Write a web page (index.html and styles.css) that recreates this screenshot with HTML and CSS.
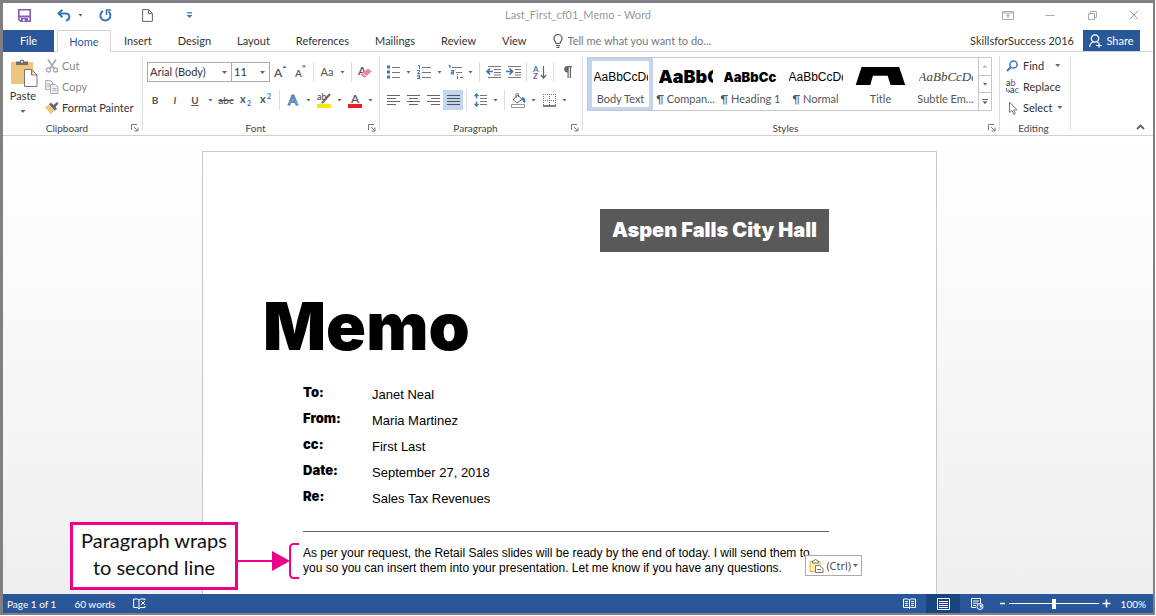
FILE: index.html
```html
<!DOCTYPE html>
<html lang="en">
<head>
<meta charset="utf-8">
<title>Last_First_cf01_Memo - Word</title>
<link rel="stylesheet" href="styles.css">
</head>
<body>
<svg class="defs" aria-hidden="true">
  <symbol id="launch" viewBox="0 0 8 8"><path d="M.5 6V.5H6M3 3l3.500 3.500M7 3.500V7H3.500" fill="none" stroke="#777"/></symbol>
</svg>
<div class="window">
  <header class="titlebar">
    <div class="quick">
      <button class="q" aria-label="Save"><svg width="13" height="13" viewBox="0 0 13 13"><path d="M.8.8h11.400v11.400H2.500L.8 10.500z" fill="#fff" stroke="#8a5bab" stroke-width="1.600"/><path d="M1 6.500h11v2H1zM3 9h7v3.500H3z" fill="#8a5bab"/><path d="M5 10h1.500v2.500H5z" fill="#fff"/></svg></button>
      <button class="q q-undo" aria-label="Undo"><svg width="14" height="13" viewBox="0 0 14 13"><path d="M2 4.500h6.500c5 0 5 6.500.5 7" fill="none" stroke="#3a78b5" stroke-width="2"/><path d="M5.500.8L1.500 4.500l4 3.700" fill="none" stroke="#3a78b5" stroke-width="2"/></svg></button>
      <button class="caret" aria-label="Undo list"></button>
      <button class="q q-redo" aria-label="Repeat"><svg width="13" height="13" viewBox="0 0 13 13"><path d="M4 2a5 5 0 1 0 5.500.5" fill="none" stroke="#3a78b5" stroke-width="2"/><path d="M7.500 6V1H12" fill="none" stroke="#3a78b5" stroke-width="1.600"/></svg></button>
      <button class="q q-new" aria-label="New"><svg width="11" height="13" viewBox="0 0 11 13"><path d="M.6.6h6l3.800 3.800v8H.6zM6.500.6v4h4" fill="#fff" stroke="#666"/></svg></button>
      <button class="q q-more" aria-label="Customize toolbar"><svg width="7" height="7" viewBox="0 0 7 7"><path d="M1 .8h5" stroke="#3a78b5" stroke-width="1.300"/><path d="M.5 3h6l-3 3z" fill="#3a78b5"/></svg></button>
    </div>
    <h1 class="caption">Last_First_cf01_Memo - Word</h1>
    <div class="winbtns">
      <button aria-label="Ribbon options"><svg width="12" height="9" viewBox="0 0 12 9"><path d="M.5.5h11v8H.5zM.5 2h11M6 7.500V3.500M4 5.300l2-1.800 2 1.800" fill="none" stroke="#a8a8a8"/></svg></button>
      <button aria-label="Minimize"><svg width="10" height="9" viewBox="0 0 10 9"><path d="M.5 4.500h9" stroke="#aaa"/></svg></button>
      <button aria-label="Restore"><svg width="9" height="9" viewBox="0 0 9 9"><path d="M.5 2.500h6v6h-6zM2.500 2.500v-2h6v6h-2" fill="none" stroke="#aaa"/></svg></button>
      <button aria-label="Close"><svg width="10" height="10" viewBox="0 0 10 10"><path d="M.7.7l8.600 8.600M9.300.7L.7 9.300" stroke="#a0a0a0"/></svg></button>
    </div>
  </header>

  <nav class="tabs">
    <button class="tab file">File</button>
    <button class="tab home">Home</button>
    <button class="tab">Insert</button>
    <button class="tab">Design</button>
    <button class="tab">Layout</button>
    <button class="tab">References</button>
    <button class="tab">Mailings</button>
    <button class="tab">Review</button>
    <button class="tab">View</button>
    <label class="tell"><svg width="10" height="14" viewBox="0 0 10 14"><path d="M3 9.500C3 7.500 1 7 1 4.500a4 4 0 0 1 8 0C9 7 7 7.500 7 9.500zM3 11.500h4M3.500 13.300h3" fill="none" stroke="#555" stroke-width="1.200"/></svg><input type="text" placeholder="Tell me what you want to do..." aria-label="Tell me what you want to do"></label>
    <span class="account">SkillsforSuccess 2016</span>
    <button class="share"><svg width="14" height="14" viewBox="0 0 14 14"><circle cx="6" cy="4.500" r="3.700" fill="none" stroke="#fff" stroke-width="1.300"/><path d="M.8 13c0-3 1.500-4.500 3.500-5M8 8l1.500 1M7 11.500h6M10 8.700v5" fill="none" stroke="#fff" stroke-width="1.200"/></svg>Share</button>
  </nav>

  <div class="ribbon">
    <section class="group clipboard">
      <div class="body">
        <button class="paste">
          <svg width="27" height="28" viewBox="0 0 27 28"><path d="M0 3h22v22H0z" fill="#edc57d"/><path d="M5 6V2.500h3.500a2.600 2.600 0 0 1 5 0H17V6z" fill="#6d6d6d"/><circle cx="11" cy="2.800" r="1" fill="#fff"/><path d="M13.500 10.500h7l5.500 5.500v11.500H13.500zM20.500 10.500V16H26" fill="#fff" stroke="#777"/></svg>
          <span>Paste</span><i class="tri"></i>
        </button>
        <div class="stack">
          <button class="line dim"><svg width="14" height="14" viewBox="0 0 14 14"><path d="M3 .5l6 9M11 .5l-6 9" stroke="#aaa" stroke-width="1.700"/><circle cx="3.500" cy="11" r="2" fill="none" stroke="#aaa" stroke-width="1.300"/><circle cx="10.500" cy="11" r="2" fill="none" stroke="#aaa" stroke-width="1.300"/></svg>Cut</button>
          <button class="line dim"><svg width="14" height="14" viewBox="0 0 14 14"><path d="M.6.6h5l2 2v7h-7zM2 4h3M2 6h3" fill="#f3eef5" stroke="#aaa"/><path d="M5.500 4.500h5l2.500 2.500v6.500H5.500zM7.500 8.500h4M7.500 10.500h4" fill="#f3eef5" stroke="#aaa"/></svg>Copy</button>
          <button class="line"><svg width="14" height="14" viewBox="0 0 14 14"><path d="M0 6l4-2 5 5-3 4.500z" fill="#edc57d"/><path d="M4 3.500l2-2 2.500 2.500L12 1l1.500 1.500-3 3.500 1.500 1.500-2 2.200z" fill="#666"/></svg>Format Painter</button>
        </div>
      </div>
      <footer class="name"><span>Clipboard</span><button class="launch" aria-label="Clipboard pane"><svg width="8" height="8"><use href="#launch"/></svg></button></footer>
    </section>

    <section class="group font">
      <div class="body rows">
        <div class="row first">
          <span class="pick pick-font"><select aria-label="Font"><option>Arial (Body)</option></select></span>
          <span class="pick pick-size"><select aria-label="Font size"><option>11</option></select></span>
          <button class="cell" aria-label="Grow font"><svg width="14" height="14" viewBox="0 0 14 14"><text x="1" y="12" class="gl g12">A</text><path d="M9.500 3l2-2.500L13.500 3z" fill="#3a78b5"/></svg></button>
          <button class="cell" aria-label="Shrink font"><svg width="14" height="14" viewBox="0 0 14 14"><text x="2" y="12" class="gl g10">A</text><path d="M9 .5h4l-2 2.500z" fill="#3a78b5"/></svg></button>
          <i class="sep"></i>
          <button class="cell txt">Aa</button><button class="caret" aria-label="Change case"></button>
          <i class="sep"></i>
          <button class="cell" aria-label="Clear formatting"><svg width="14" height="14" viewBox="0 0 14 14"><text x="0" y="10" class="gl g12">A</text><path d="M2.500 9.500L10 3.500 13.500 6.500 6.500 13z" fill="#e9859c"/><path d="M4.500 8l4 3.500" stroke="#fff"/></svg></button>
        </div>
        <div class="row">
          <button class="cell txt b">B</button><button class="cell txt b i">I</button><button class="cell txt b u">U</button><button class="caret" aria-label="Underline style"></button>
          <button class="cell txt strike">abc</button>
          <button class="cell" aria-label="Subscript"><svg width="14" height="14" viewBox="0 0 14 14"><text x="1" y="10" class="gl g11">x</text><text x="8" y="13" class="bl">2</text></svg></button>
          <button class="cell" aria-label="Superscript"><svg width="14" height="14" viewBox="0 0 14 14"><text x="1" y="10" class="gl g11">x</text><text x="8" y="6" class="bl">2</text></svg></button>
          <i class="sep"></i>
          <button class="cell" aria-label="Text effects"><svg width="14" height="14" viewBox="0 0 14 14"><text x="2" y="12" class="fx">A</text></svg></button><button class="caret" aria-label="Effects list"></button>
          <button class="cell" aria-label="Highlight"><svg width="14" height="16" viewBox="0 0 14 16"><text x="0" y="8" class="gl g9">ab</text><path d="M13 2L6.500 9.500 5 11" stroke="#666" stroke-width="2"/><path d="M0 12h14v4H0z" fill="#f6e80a"/></svg></button><button class="caret" aria-label="Highlight color"></button>
          <button class="cell" aria-label="Font color"><svg width="14" height="16" viewBox="0 0 14 16"><text x="3" y="11" class="gl g12">A</text><path d="M0 12h14v4H0z" fill="#ee1d23"/></svg></button><button class="caret" aria-label="Font color list"></button>
        </div>
      </div>
      <footer class="name"><span>Font</span><button class="launch" aria-label="Font dialog"><svg width="8" height="8"><use href="#launch"/></svg></button></footer>
    </section>

    <section class="group para">
      <div class="body rows">
        <div class="row">
          <button class="cell" aria-label="Bullets"><svg width="13" height="14" viewBox="0 0 13 14"><path d="M0 .5h3v3H0zM0 5.500h3v3H0zM0 10.500h3v3H0z" fill="#3a78b5"/><path d="M5 2.500h8M5 7.500h8M5 12.500h8" stroke="#777"/></svg></button><button class="caret" aria-label="Bullet list"></button>
          <button class="cell" aria-label="Numbering"><svg width="14" height="14" viewBox="0 0 14 14"><path d="M1 .5h1.500V4M0 5.500h2.500v1.200L.5 8.500h2.500M0 10.200h2.500v3.300H0M.5 11.800h2" fill="none" stroke="#3a78b5"/><path d="M5 2.500h9M5 7.500h9M5 12.500h9" stroke="#777"/></svg></button><button class="caret" aria-label="Number list"></button>
          <button class="cell" aria-label="Multilevel list"><svg width="15" height="14" viewBox="0 0 15 14"><path d="M.5.5h1.500V3M3 5.500h2.500V9H3.500V7.200h2M9.500 9v1M9.500 11v3" fill="none" stroke="#3a78b5" stroke-width="1.200"/><path d="M4 2.500h10M8 7.500h6M12 12.500h3" stroke="#777"/></svg></button><button class="caret" aria-label="Multilevel styles"></button>
          <i class="sep"></i>
          <button class="cell" aria-label="Decrease indent"><svg width="15" height="12" viewBox="0 0 15 12"><path d="M2 .5h13M8 3.500h7M8 6.500h7M8 9h7M2 11.500h13" stroke="#777"/><path d="M1 5.500h6M4 2.500L1 5.500l3 3" fill="none" stroke="#3a78b5" stroke-width="1.700"/></svg></button>
          <button class="cell" aria-label="Increase indent"><svg width="15" height="12" viewBox="0 0 15 12"><path d="M2 .5h13M9 3.500h6M9 6.500h6M9 9h6M2 11.500h13" stroke="#777"/><path d="M0 5.500h6M3.500 2.500l3 3-3 3" fill="none" stroke="#3a78b5" stroke-width="1.700"/></svg></button>
          <i class="sep"></i>
          <button class="cell" aria-label="Sort"><svg width="14" height="15" viewBox="0 0 14 15"><text x="0" y="7" class="az">A</text><text x="0" y="14" class="az z">Z</text><path d="M10.500 1v12M7.800 10l2.700 3 2.700-3" fill="none" stroke="#666" stroke-width="1.200"/></svg></button>
          <i class="sep"></i>
          <button class="cell" aria-label="Show marks"><svg width="9" height="12" viewBox="0 0 9 12"><path d="M4.500 0H9v1.200H8V12H6.800V1.200H5.700V12H4.500V6.500a3.200 3.200 0 0 1 0-6.500z" fill="#666"/></svg></button>
        </div>
        <div class="row">
          <button class="cell" aria-label="Align left"><svg width="13" height="11" viewBox="0 0 13 11"><path d="M0 .5h13M0 3.500h9M0 6.500h13M0 9.500h9" stroke="#666"/></svg></button>
          <button class="cell" aria-label="Center"><svg width="13" height="11" viewBox="0 0 13 11"><path d="M0 .5h13M2 3.500h9M0 6.500h13M2 9.500h9" stroke="#666"/></svg></button>
          <button class="cell" aria-label="Align right"><svg width="13" height="11" viewBox="0 0 13 11"><path d="M0 .5h13M4 3.500h9M0 6.500h13M4 9.500h9" stroke="#666"/></svg></button>
          <button class="cell on" aria-label="Justify"><svg width="13" height="11" viewBox="0 0 13 11"><path d="M0 .5h13M0 3.500h13M0 6.500h13M0 9.500h13" stroke="#555"/></svg></button>
          <i class="sep"></i>
          <button class="cell" aria-label="Line spacing"><svg width="13" height="14" viewBox="0 0 13 14"><path d="M2.500 1v4.500M.5 3.200l2-2.200 2 2.200M2.500 8.500V13M.5 10.800l2 2.200 2-2.200" fill="none" stroke="#3a78b5" stroke-width="1.300"/><path d="M6 2.500h7M6 5.500h7M6 8.500h7M6 11.500h7" stroke="#777"/></svg></button><button class="caret" aria-label="Spacing options"></button>
          <i class="sep"></i>
          <button class="cell" aria-label="Shading"><svg width="15" height="15" viewBox="0 0 15 15"><path d="M2 6.500l5-4.500 4 4.500-5 3.500zM5 5V1.500c0-1.500 2.500-1.500 2.500 0V4" fill="#fff" stroke="#666"/><path d="M11 4c3 .5 3.500 3 3 6-1.500-.5-2.500-2-3-3.500z" fill="#3a78b5"/><path d="M.5 11.500h13v3H.5z" fill="#fff" stroke="#999"/></svg></button><button class="caret" aria-label="Shading colors"></button>
          <button class="cell" aria-label="Borders"><svg width="13" height="13" viewBox="0 0 13 13"><path d="M.5 0v12M6.500 0v12M12.500 0v12M0 .5h13M0 6.500h13" stroke="#777" stroke-dasharray="1 1"/><path d="M0 12h13" stroke="#555" stroke-width="1.500"/></svg></button><button class="caret" aria-label="Border list"></button>
        </div>
      </div>
      <footer class="name"><span>Paragraph</span><button class="launch" aria-label="Paragraph dialog"><svg width="8" height="8"><use href="#launch"/></svg></button></footer>
    </section>

    <section class="group styles">
      <div class="body">
        <div class="gallery">
          <button class="style chosen"><span class="sample">AaBbCcDd</span><span>Body Text</span></button>
          <button class="style"><span class="sample black large">AaBbC</span><span>¶ Compan...</span></button>
          <button class="style"><span class="sample black">AaBbCc</span><span>¶ Heading 1</span></button>
          <button class="style"><span class="sample">AaBbCcDd</span><span>¶ Normal</span></button>
          <button class="style"><span class="sample huge"><b>A</b></span><span>Title</span></button>
          <button class="style"><span class="sample subtle">AaBbCcDd</span><span>Subtle Em...</span></button>
          <div class="scroll"><button class="up" aria-label="Previous styles"></button><button aria-label="Next styles"></button><button class="more" aria-label="More styles"></button></div>
        </div>
      </div>
      <footer class="name"><span>Styles</span><button class="launch" aria-label="Styles pane"><svg width="8" height="8"><use href="#launch"/></svg></button></footer>
    </section>

    <section class="group editing">
      <div class="body">
        <div class="stack">
          <button class="line"><svg width="14" height="12" viewBox="0 0 14 12"><circle cx="7.500" cy="4.500" r="3.600" fill="none" stroke="#3a78b5" stroke-width="1.500"/><path d="M5 7L1 11" stroke="#3a78b5" stroke-width="2"/></svg>Find<i class="tri far"></i></button>
          <button class="line"><svg width="14" height="14" viewBox="0 0 14 14"><text x="0" y="6" class="ab">a<tspan class="z">b</tspan></text><text x="4" y="13" class="ab">a<tspan class="c">c</tspan></text><path d="M.5 8v3h3M2.500 9.500L4 11l-1.500 1.500" fill="none" stroke="#3a78b5"/></svg>Replace</button>
          <button class="line"><svg width="14" height="14" viewBox="0 0 14 14"><path d="M3.500 1v10.500l2.500-2 1.800 4 1.600-.8-1.700-3.700h3.300z" fill="#fff" stroke="#777"/></svg>Select<i class="tri"></i></button>
        </div>
      </div>
      <footer class="name"><span>Editing</span></footer>
    </section>
    <button class="fold" aria-label="Collapse ribbon"><svg width="9" height="6" viewBox="0 0 9 6"><path d="M1 5l3.500-3.500L8 5" fill="none" stroke="#666" stroke-width="1.800"/></svg></button>
  </div>

  <main class="desk">
    <article class="paper">
      <p class="org">Aspen Falls City Hall</p>
      <h2 class="memo">Memo</h2>
      <div class="text">
        <dl class="fields">
          <dt>To:</dt><dd>Janet Neal</dd>
          <dt>From:</dt><dd>Maria Martinez</dd>
          <dt>cc:</dt><dd>First Last</dd>
          <dt>Date:</dt><dd>September 27, 2018</dd>
          <dt>Re:</dt><dd>Sales Tax Revenues</dd>
        </dl>
        <div class="message">
          <p>As per your request, the Retail Sales slides will be ready by the end of today. I will send them to<br>you so you can insert them into your presentation. Let me know if you have any questions.</p>
          <button class="ctrl"><svg width="15" height="14" viewBox="0 0 15 14"><path d="M1 2.500h10v10H1z" fill="#fdf0b0" stroke="#e0b63c"/><path d="M3.500 4V2H5a1.500 1.500 0 0 1 3 0h1.500v2z" fill="#fff" stroke="#777"/><path d="M6.500 6.500h4l3.500 3v4H6.500zM8 10.500h4" fill="#fff" stroke="#777"/></svg>(Ctrl)<i class="tri"></i></button>
          <aside class="callout">
            <p class="note">Paragraph wraps<br>to second line</p>
            <svg width="61" height="38" viewBox="0 0 61 38"><path d="M0 19h38" stroke="#ec008c" stroke-width="2"/><path d="M34 9l18 10-18 10z" fill="#ec008c"/><path d="M61 2h-5q-4 0-4 4v26q0 4 4 4h5" fill="none" stroke="#ec008c" stroke-width="2"/></svg>
          </aside>
        </div>
      </div>
    </article>
  </main>

  <footer class="status">
    <span class="pages">Page 1 of 1</span>
    <span class="words">60 words</span>
    <button class="proof" aria-label="Proofing"><svg width="13" height="12" viewBox="0 0 13 12"><path d="M6 2v9M6 2L4.500 1H.6v8.500h4L6 11l1.500-1.500H12V8M6 2l1.500-1H12v1M8 3l4 4M12 3L8 7" fill="none" stroke="#fff"/></svg></button>
    <div class="views">
      <button aria-label="Read mode"><svg width="13" height="12" viewBox="0 0 13 12"><path d="M.5 1h5l1 1 1-1h5v8.500h-5l-1 1-1-1h-5zM6.500 2v8.500M2 3.500h3M2 5.500h3M2 7.500h3M8 3.500h3M8 5.500h3M8 7.500h3" fill="none" stroke="#fff"/></svg></button>
      <button class="now" aria-label="Print layout"><svg width="13" height="12" viewBox="0 0 13 12"><path d="M.5.5h12v11H.5zM2 3.500h9M2 5.500h9M2 7.500h9M2 9.500h9" fill="none" stroke="#fff"/></svg></button>
      <button aria-label="Web layout"><svg width="13" height="12" viewBox="0 0 13 12"><path d="M9.500 5V.5H.5v9H5M2 3h6M2 5.200h5M2 7.500h3" fill="none" stroke="#fff"/><circle cx="9" cy="8.500" r="3" fill="none" stroke="#fff"/><path d="M8 6.500l3 1-1 3z" fill="#fff"/></svg></button>
    </div>
    <button class="zoombtn" aria-label="Zoom out"><svg width="9" height="9" viewBox="0 0 9 9"><path d="M2 4.500h5" stroke="#fff" stroke-width="1.500"/></svg></button>
    <input class="zoom" type="range" min="0" max="100" value="50" aria-label="Zoom">
    <button class="zoombtn" aria-label="Zoom in"><svg width="9" height="9" viewBox="0 0 9 9"><path d="M.5 4.500h8M4.500.5v8" stroke="#fff" stroke-width="1.500"/></svg></button>
    <span class="percent">100%</span>
  </footer>
</div>
</body>
</html>
```
FILE: styles.css
```css
* { box-sizing: border-box; margin: 0; padding: 0; }
body { background: #fff; font: 11px/16px Lato, "Open Sans", sans-serif; color: #333; }
button { font: inherit; color: inherit; background: none; border: 0; white-space: nowrap; }
svg { display: block; flex: none; overflow: visible; }
.defs { position: absolute; width: 0; height: 0; }

.window { display: flex; flex-direction: column; height: calc(100vh - 1px); margin-right: 1px; border: 3px solid #808084; border-right-width: 2px; border-bottom-width: 2px; overflow: hidden; }

.titlebar { flex: none; display: grid; grid-template-columns: 1fr auto 1fr; align-items: center; height: 27px; padding-bottom: 3px; }
.quick { display: flex; align-items: center; padding-left: 15px; }
.q { display: flex; align-items: center; }
.q-undo { margin-left: 26px; }
.q-redo { margin-left: 13px; }
.q-new { margin-left: 30px; }
.q-more { margin-left: 33px; }
.caption { font-size: 11px; font-weight: 400; color: #999; }
.winbtns { display: flex; justify-content: flex-end; gap: 4px; }
.winbtns button { display: flex; justify-content: center; align-items: center; width: 38px; }

.caret { position: relative; width: 11px; height: 16px; flex: none; }
.q-undo + .caret { margin-left: 4px; }
.caret::after, .tri { content: ""; display: block; width: 5px; height: 3px; background: #666; clip-path: polygon(0 0, 100% 0, 50% 100%); margin: 0 auto; }
.tri { flex: none; margin: 0; }

.tabs { flex: none; display: flex; align-items: stretch; height: 22px; border-bottom: 1px solid #d4d4d4; }
.tab { padding: 0 13px; flex: none; }
.file { width: 51px; margin-right: 3px; background: #2a579a; color: #fff; margin-bottom: -1px; }
.home { width: 54px; padding: 0; border: 1px solid #d4d4d4; border-bottom: 0; background: #fff; color: #2a579a; margin-bottom: -1px; }
.tell { display: flex; align-items: center; gap: 5px; margin-left: 13px; flex: 1; min-width: 0; }
.tell input { border: 0; outline: 0; width: 100%; font: inherit; background: none; }
.tell input::placeholder { color: #777; opacity: 1; }
.account { align-self: center; margin-right: 9px; white-space: nowrap; }
.share { display: flex; align-items: center; gap: 3px; width: 57px; justify-content: center; margin-right: 13px; background: #2a579a; color: #fff; }

.ribbon { flex: none; display: flex; height: 84px; border-bottom: 1px solid #d0d0d0; background: #fff; }
.group { display: flex; flex-direction: column; flex: none; position: relative; }
.group::after { content: ""; position: absolute; right: 0; top: 4px; bottom: 5px; border-right: 1px solid #dcdcdc; }
.clipboard { width: 140px; }
.font { width: 237px; }
.para { width: 203px; }
.styles { width: 417px; }
.editing { width: 71px; }
.body { display: flex; height: 68px; }
.name { display: flex; align-items: center; height: 15px; padding-right: 4px; font-size: 10px; color: #444; }
.name span { flex: 1; text-align: center; }
.fold { margin: auto 8px 5px auto; }

.paste { display: flex; flex-direction: column; align-items: center; width: 40px; padding-top: 7px; }
.paste svg { margin-left: 3px; }
.paste span { line-height: 16px; margin-top: 1px; }
.paste .tri { margin-top: 6px; }
.stack { display: flex; flex-direction: column; padding-top: 3px; }
.line { display: flex; align-items: center; gap: 3px; height: 21px; }
.line.dim { color: #888; }
.clipboard .stack { padding-left: 2px; }
.editing .stack { padding-left: 6px; }
.line .tri { margin-left: 2px; }
.line .tri.far { margin-left: 8px; }

.rows { flex-direction: column; gap: 8px; padding-top: 10px; padding-left: 3px; }
.row { display: flex; align-items: center; height: 20px; }
.font .row { margin-left: -1px; }
.font .row.first { margin-left: 1px; }
.cell { display: flex; align-items: center; justify-content: center; width: 20px; height: 20px; flex: none; }
.cell.on { background: #c3d5ef; }
.sep { width: 1px; height: 20px; margin: 0 3px; background: #dcdcdc; flex: none; }
.txt { color: #555; }
.b { font-weight: 700; font-size: 10px; }
.i { font-style: italic; }
.u { text-decoration: underline; }
.strike { font-size: 10px; text-decoration: line-through; font-weight: 600; }
.gl { fill: #555; font-weight: 600; }
.g12 { font-size: 12px; }
.g11 { font-size: 11px; font-weight: 700; }
.g10 { font-size: 10px; }
.g9 { font-size: 9px; }
.bl { fill: #3a78b5; font-size: 7px; font-weight: 700; }
.fx { font-size: 14px; font-weight: 600; fill: #fff; stroke: #3a78b5; }
.az { font-size: 8px; font-weight: 700; fill: #3a78b5; }
.ab { font-size: 9px; font-weight: 600; fill: #444; }
.z { fill: #8a4fae; }
.c { fill: #3a78b5; }

.pick { position: relative; height: 20px; border: 1px solid #ababab; flex: none; }
.pick-font { width: 85px; }
.pick-size { width: 39px; margin-left: -1px; }
.pick select { appearance: none; width: 100%; height: 100%; border: 0; background: none; padding-left: 2px; font: inherit; color: #333; }
.pick::after { content: ""; position: absolute; right: 4px; top: 8px; width: 5px; height: 3px; background: #666; clip-path: polygon(0 0, 100% 0, 50% 100%); }

.gallery { display: flex; height: 54px; margin: 5px 0 0 4px; border: 1px solid #c6c6c6; }
.style { display: flex; flex-direction: column; align-items: center; gap: 5px; width: 65px; padding-top: 6px; border: 4px solid transparent; border-width: 3px 4px; font-size: 11px; line-height: 14px; color: #555; }
.chosen { border-color: #c3d5ef; }
.sample { display: flex; width: 54px; height: 20px; line-height: 20px; overflow: hidden; font-family: "Liberation Sans", Arial, sans-serif; font-size: 12px; color: #000; }
.black { font-family: Inter, "Liberation Sans", sans-serif; font-weight: 900; font-size: 13px; }
.large { font-size: 18px; }
.subtle { font-family: "Liberation Serif", serif; font-style: italic; font-size: 13px; color: #444; }
.huge { height: 18px; margin-bottom: 2px; align-items: flex-end; justify-content: center; }
.huge b { font: 900 66px/66px Inter, "Liberation Sans", sans-serif; margin-bottom: -9px; }
.scroll { display: flex; flex-direction: column; width: 13px; }
.scroll button { flex: 1; border-left: 1px solid #c6c6c6; display: flex; align-items: center; justify-content: center; }
.scroll button + button { border-top: 1px solid #c6c6c6; }
.scroll button::after { content: ""; width: 5px; height: 3px; background: #666; clip-path: polygon(0 0, 100% 0, 50% 100%); }
.scroll .up::after { background: #bbb; clip-path: polygon(50% 0, 100% 100%, 0 100%); }
.scroll .more { flex-direction: column; gap: 1px; }
.scroll .more::before { content: ""; width: 6px; height: 1px; background: #666; }

.desk { flex: 1; min-height: 0; overflow: hidden; display: flex; padding: 15px 17px 0 0; background: linear-gradient(#fff, #efefef); }
.paper { width: 100%; max-width: 735px; margin: 0 auto; padding: 57px 107px 0 60px; background: #fff; border: 1px solid #c8c8c8; border-bottom: 0; color: #000; }
.org { width: fit-content; margin-left: auto; padding: 0 12px; line-height: 43px; background: #595959; color: #fff; font-family: Inter, "Liberation Sans", sans-serif; font-weight: 900; font-size: 20px; }
.memo { margin-top: 34px; font: 900 66px/80px Inter, "Liberation Sans", sans-serif; }
.text { margin: 15px 0 0 40px; font: 13px/15px "Liberation Sans", Arial, sans-serif; }
.fields { display: grid; grid-template-columns: 69px 1fr; grid-auto-rows: 26px; align-items: center; padding-bottom: 20px; border-bottom: 1px solid #666; }
.fields dt { font-family: Inter, "Liberation Sans", sans-serif; font-weight: 900; padding-bottom: 3px; }
.message { position: relative; padding-top: 14px; white-space: nowrap; font-size: 12px; }
.ctrl { position: absolute; right: -33px; top: 23px; display: flex; align-items: center; gap: 2px; height: 21px; padding: 0 3px; background: #fff; border: 1px solid #ababab; font: 11px/16px "Open Sans", "Noto Sans", sans-serif; color: #444; }
.callout { position: absolute; right: calc(100% + 4px); top: -10px; display: flex; align-items: center; }
.callout svg { margin-top: 9px; }
.note { width: 168px; padding: 2px 0 6px; border: 3px solid #ec008c; background: #fff; text-align: center; font: 20px/27px Lato, "Open Sans", sans-serif; color: #111; }

.status { flex: none; display: flex; align-items: center; height: 19px; background: #2a579a; color: #fff; font-size: 10px; padding: 0 7px 0 4px; }
.words { margin-left: 18px; }
.proof { margin-left: 18px; }
.views { display: flex; align-self: stretch; margin-left: auto; }
.views button { display: flex; align-items: center; justify-content: center; width: 34px; }
.views .now { background: #1a4480; }
.zoombtn { margin-left: 3px; }
.views + .zoombtn { margin-left: 4px; }
.zoom { appearance: none; width: 90px; height: 12px; margin: 0 0 0 2px; background: linear-gradient(#fff, #fff) center / 100% 1px no-repeat; }
.zoom::-webkit-slider-thumb { appearance: none; width: 4px; height: 10px; background: #fff; }
.percent { width: 35px; text-align: right; }
```
